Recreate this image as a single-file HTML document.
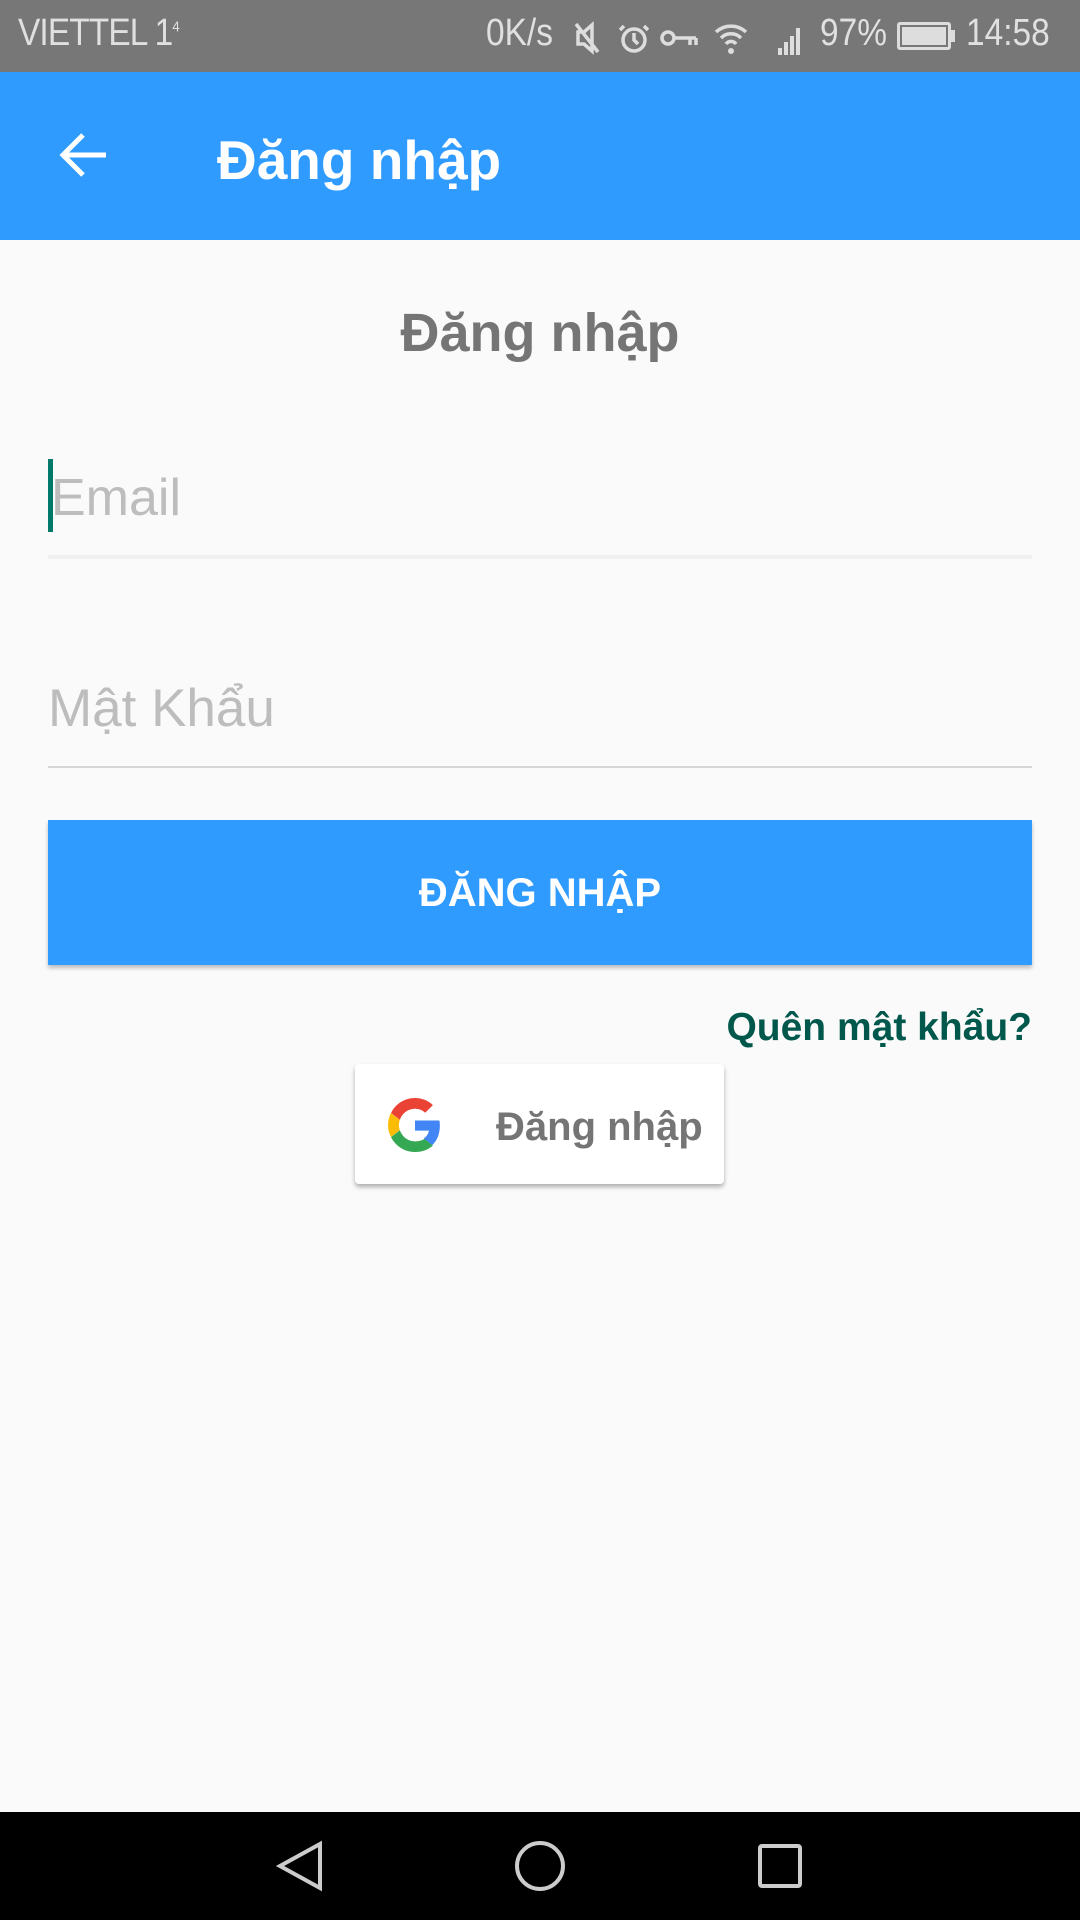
<!DOCTYPE html>
<html><head><meta charset="utf-8"><style>
*{margin:0;padding:0;box-sizing:border-box}
body{width:1080px;height:1920px;background:#fafafa;font-family:"Liberation Sans",sans-serif;position:relative;overflow:hidden}
.a{position:absolute}
</style></head><body>
<div class="a" style="left:0;top:0;width:1080px;height:72px;background:#777"></div>
<div class="a" style="left:18px;top:12px;font-size:38px;color:#e0e0e0;letter-spacing:-1px;transform:scaleX(.88);transform-origin:left">VIETTEL 1<sup style="font-size:15px">4</sup></div>
<div class="a" style="left:486px;top:12px;font-size:38px;color:#e0e0e0;transform:scaleX(.88);transform-origin:left">0K/s</div>
<svg class="a" style="left:570px;top:18px" width="480" height="40" viewBox="0 0 480 40">
<g fill="none" stroke="#ddd" stroke-width="3.5">
<path d="M6 6 L28 34 M8 14h6l8-7v26l-8-7H8z"/>
<circle cx="64" cy="22" r="11"/><path d="M64 15v7l4 4 M54 8l-4 4 M74 8l4 4"/>
<circle cx="98" cy="20" r="6"/><path d="M104 20h22 M120 20v7 M126 20v7"/>
<path d="M146 14a22 22 0 0 1 30 0 M151 20a14 14 0 0 1 20 0 M156 26a6 6 0 0 1 10 0"/>
</g>
<circle cx="161" cy="33" r="3" fill="#ddd"/>
<g fill="#ddd"><rect x="208" y="30" width="4" height="7"/><rect x="214" y="24" width="4" height="13"/><rect x="220" y="18" width="4" height="19"/><rect x="226" y="10" width="4" height="27"/></g>
</svg>
<div class="a" style="left:820px;top:12px;font-size:38px;color:#e0e0e0;transform:scaleX(.88);transform-origin:left">97%</div>
<div class="a" style="left:897px;top:22px;width:54px;height:28px;border:3px solid #ddd;border-radius:3px;background:#ddd;box-shadow:inset 0 0 0 2px #777"></div>
<div class="a" style="left:951px;top:30px;width:4px;height:12px;background:#ddd"></div>
<div class="a" style="left:966px;top:12px;font-size:38px;color:#e0e0e0;transform:scaleX(.88);transform-origin:left">14:58</div>

<div class="a" style="left:0;top:72px;width:1080px;height:168px;background:#2f9bff"></div>
<svg class="a" style="left:56px;top:130px" width="56" height="50" viewBox="0 0 56 50"><path d="M50 25H8 M27 5L7 25l20 20" fill="none" stroke="#fff" stroke-width="5"/></svg>
<div class="a" style="left:217px;top:128px;font-size:55px;color:#fff;font-weight:bold;line-height:64px">Đăng nhập</div>

<div class="a" style="left:0;top:300px;width:1080px;text-align:center;font-size:54px;color:#757575;font-weight:bold;line-height:66px">Đăng nhập</div>

<div class="a" style="left:48px;top:459px;width:5px;height:73px;background:#00796b"></div>
<div class="a" style="left:51px;top:468px;font-size:52px;color:#bdbdbd;line-height:60px">Email</div>
<div class="a" style="left:48px;top:555px;width:984px;height:4px;background:#f0f0f0"></div>

<div class="a" style="left:48px;top:679px;font-size:53px;color:#bdbdbd;line-height:60px">Mật Khẩu</div>
<div class="a" style="left:48px;top:766px;width:984px;height:2px;background:#d6d6d6"></div>

<div class="a" style="left:48px;top:820px;width:984px;height:145px;background:#2f9bff;box-shadow:0 3px 4px rgba(0,0,0,.25);color:#fff;font-size:40px;font-weight:bold;text-align:center;line-height:147px">ĐĂNG NHẬP</div>

<div class="a" style="right:48px;top:1004px;font-size:39px;color:#00574b;font-weight:bold;line-height:48px">Quên mật khẩu?</div>

<div class="a" style="left:355px;top:1064px;width:369px;height:120px;background:#fff;border-radius:4px;box-shadow:0 3px 5px rgba(0,0,0,.3)"></div>
<svg class="a" style="left:388px;top:1098px" width="54" height="54" viewBox="0 0 48 48">
<path fill="#EA4335" d="M24 9.5c3.5 0 6.6 1.2 9.1 3.6l6.8-6.8C35.8 2.4 30.4 0 24 0 14.6 0 6.6 5.4 2.7 13.3l7.9 6.1C12.5 13.6 17.8 9.5 24 9.5z"/>
<path fill="#4285F4" d="M46.1 24.5c0-1.6-.1-3.1-.4-4.5H24v9h12.4c-.5 2.9-2.2 5.4-4.7 7l7.6 5.9c4.4-4.1 6.8-10.1 6.8-17.4z"/>
<path fill="#FBBC05" d="M10.5 28.6c-.5-1.5-.8-3-.8-4.6s.3-3.2.8-4.6l-7.9-6.1C1 16.5 0 20.1 0 24s1 7.5 2.7 10.7l7.8-6.1z"/>
<path fill="#34A853" d="M24 48c6.5 0 11.9-2.1 15.9-5.8l-7.6-5.9c-2.1 1.4-4.9 2.3-8.3 2.3-6.2 0-11.5-4.2-13.4-9.9l-7.9 6.1C6.6 42.6 14.6 48 24 48z"/>
</svg>
<div class="a" style="left:496px;top:1102px;font-size:40px;color:#757575;font-weight:bold;line-height:50px">Đăng nhập</div>

<div class="a" style="left:0;top:1812px;width:1080px;height:108px;background:#000"></div>
<svg class="a" style="left:0;top:1812px" width="1080" height="108" viewBox="0 0 1080 108">
<g fill="none" stroke="#ccc" stroke-width="4">
<path d="M320 32 L280 54 L320 76z"/>
<circle cx="540" cy="54" r="23"/>
<rect x="760" y="34" width="40" height="40" rx="2"/>
</g></svg>
</body></html>
